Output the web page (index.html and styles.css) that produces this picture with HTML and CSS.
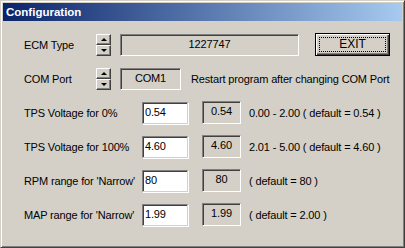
FILE: index.html
```html
<!DOCTYPE html>
<html lang="en">
<head>
  <meta charset="UTF-8" />
  <title>Configuration</title>
  <link rel="stylesheet" href="styles.css">
</head>
<body>
  <div class="window">
    <div class="titlebar">Configuration</div>

    <div class="content">
      <div class="row row-ecm">
        <span class="label short">ECM Type</span>
        <div class="spin">
          <button class="spin-btn"><span class="arrow up"></span></button>
          <button class="spin-btn"><span class="arrow down"></span></button>
        </div>
        <div class="field ecm">1227747</div>
        <button class="exit"><span class="focus">EXIT</span></button>
      </div>

      <div class="row row-com">
        <span class="label short">COM Port</span>
        <div class="spin">
          <button class="spin-btn"><span class="arrow up"></span></button>
          <button class="spin-btn"><span class="arrow down"></span></button>
        </div>
        <div class="field com">COM1</div>
        <span class="note">Restart program after changing COM Port</span>
      </div>

      <div class="row">
        <span class="label long">TPS Voltage for 0%</span>
        <input class="edit" type="text" value="0.54">
        <div class="field value">0.54</div>
        <span class="note">0.00 - 2.00 ( default = 0.54 )</span>
      </div>

      <div class="row">
        <span class="label long">TPS Voltage for 100%</span>
        <input class="edit" type="text" value="4.60">
        <div class="field value">4.60</div>
        <span class="note">2.01 - 5.00 ( default = 4.60 )</span>
      </div>

      <div class="row">
        <span class="label long">RPM range for 'Narrow'</span>
        <input class="edit" type="text" value="80">
        <div class="field value">80</div>
        <span class="note">( default = 80 )</span>
      </div>

      <div class="row">
        <span class="label long">MAP range for 'Narrow'</span>
        <input class="edit" type="text" value="1.99">
        <div class="field value">1.99</div>
        <span class="note">( default = 2.00 )</span>
      </div>
    </div>
  </div>
</body>
</html>
```

FILE: styles.css
```css
html, body {
  margin: 0;
  padding: 0;
  background-color: #d4d0c8;
}

body {
  font-family: 'Liberation Sans', Arial, sans-serif;
  font-size: 11px;
  letter-spacing: -0.15px;
  color: #000;
}

.window {
  width: 405px;
  height: 248px;
  box-sizing: border-box;
  background-color: #d4d0c8;
  border-top: 1px solid #d4d0c8;
  border-left: 1px solid #d4d0c8;
  border-right: 1px solid #404040;
  border-bottom: 1px solid #404040;
  box-shadow: inset 1px 1px 0 #ffffff, inset -1px -1px 0 #808080;
  padding: 2px;
}

.titlebar {
  height: 18px;
  line-height: 18px;
  padding-left: 3px;
  color: #ffffff;
  font-weight: bold;
  font-size: 11.5px;
  letter-spacing: 0;
  background: linear-gradient(to right, #0a246a, #a6caf0);
}

.content {
  padding: 12px 0 0 21px;
}

.row {
  display: flex;
  align-items: center;
  height: 22px;
  margin-bottom: 12px;
}

.row-com {
  margin-top: 1px;
}

.row-ecm {
  height: 23px;
  margin-bottom: 12px;
}

.label {
  flex: none;
}

.label.short {
  width: 72px;
}

.label.long {
  width: 118px;
}

.spin {
  display: flex;
  flex-direction: column;
  width: 15px;
  height: 22px;
  margin-right: 9px;
}

.spin-btn {
  width: 15px;
  height: 11px;
  padding: 0;
  margin: 0;
  background-color: #d4d0c8;
  border: 1px solid;
  border-color: #ffffff #404040 #404040 #ffffff;
  box-shadow: inset -1px -1px 0 #808080;
  display: flex;
  align-items: center;
  justify-content: center;
}

.arrow {
  width: 0;
  height: 0;
  border-left: 3px solid transparent;
  border-right: 3px solid transparent;
}

.arrow.up {
  border-bottom: 3px solid #000;
}

.arrow.down {
  border-top: 3px solid #000;
}

.field {
  box-sizing: border-box;
  height: 22px;
  line-height: 19px;
  text-align: center;
  background-color: #d4d0c8;
  border: 1px solid;
  border-color: #808080 #ffffff #ffffff #808080;
  box-shadow: inset 1px 1px 0 #404040;
  flex: none;
}

.field.ecm {
  width: 179px;
  margin-right: 16px;
}

.field.com {
  width: 61px;
  margin-right: 10px;
}

.field.value {
  width: 39px;
  height: 23px;
  margin-left: 14px;
  margin-right: 8px;
  margin-top: -2px;
}

.edit {
  box-sizing: border-box;
  width: 46px;
  height: 22px;
  margin: 0;
  padding: 0 0 3px 2px;
  font-family: 'Liberation Sans', Arial, sans-serif;
  font-size: 11px;
  letter-spacing: -0.15px;
  color: #000;
  background-color: #ffffff;
  border: 1px solid;
  border-color: #808080 #d4d0c8 #d4d0c8 #808080;
  box-shadow: inset 1px 1px 0 #404040, 1px 1px 0 #ffffff;
  outline: none;
  flex: none;
}

.note {
  white-space: nowrap;
}

.exit {
  box-sizing: border-box;
  width: 75px;
  height: 23px;
  padding: 3px;
  margin: 0;
  background-color: #d4d0c8;
  border: 1px solid #000;
  box-shadow: inset 1px 1px 0 #ffffff, inset -1px -1px 0 #404040, inset -2px -2px 0 #808080;
  font-family: 'Liberation Sans', Arial, sans-serif;
  font-size: 12px;
  color: #000;
  display: flex;
}

.exit .focus {
  flex: 1;
  border: 1px dotted #000;
  line-height: 13px;
  text-align: center;
}
```
